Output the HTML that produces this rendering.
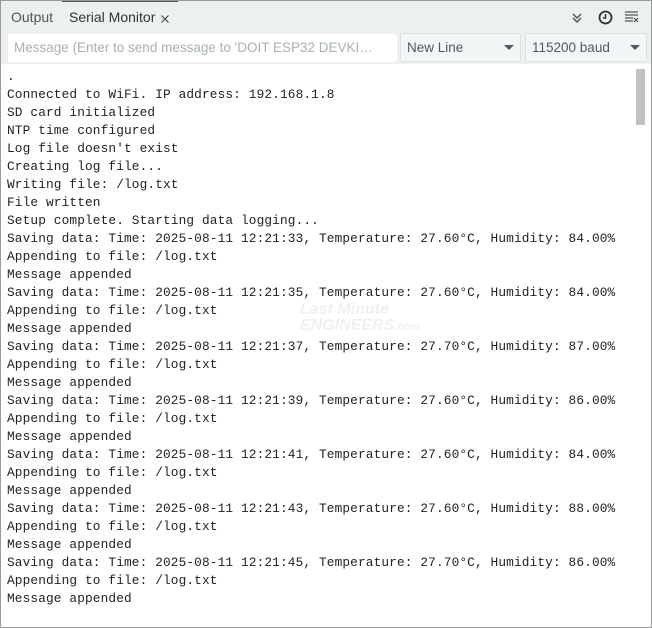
<!DOCTYPE html>
<html><head><meta charset="utf-8"><style>
*{margin:0;padding:0;box-sizing:border-box}
body{width:652px;height:628px;overflow:hidden;background:#fff;font-family:"Liberation Sans",sans-serif;position:relative}
.frame{position:absolute;left:0;top:0;width:652px;height:628px;border:1px solid #9a9a9a;}
.head{position:absolute;left:1px;top:1px;width:650px;height:63px;background:#ecf0f1}
.tab{position:absolute;top:8px;font-size:14px;color:#555}
.activebar{position:absolute;left:61px;top:0;width:116px;height:1px;background:#555}
.inp{position:absolute;left:7px;top:33px;width:389px;height:28px;background:#fff;border-radius:2px;font-size:13.5px;color:#a9b0b3;padding:6px 6px}
.dd{position:absolute;top:32px;height:29px;background:#f3f6f7;border:1px solid #dbe1e3;border-radius:2px;font-size:13.5px;color:#4d5a60;padding:6px 6px}
.tri{position:absolute;right:6px;top:11px;width:0;height:0;border-left:5px solid transparent;border-right:5px solid transparent;border-top:5px solid #4d5a60}
pre{position:absolute;left:7px;top:68px;font-family:"Liberation Mono","Courier New",monospace;font-size:12.8px;letter-spacing:0.12px;line-height:18px;color:#222}
.sb{position:absolute;left:636px;top:69px;width:9px;height:56px;background:#c1c1c1}
.wm{position:absolute;left:300px;top:302px;color:#eef0f2;font-style:italic;font-weight:bold;font-size:16px;line-height:16px}
</style></head><body>
<div class="head">
<div class="activebar"></div>
<div class="tab" style="left:10px">Output</div>
<div class="tab" style="left:68px;color:#333">Serial Monitor</div>
<svg style="position:absolute;left:160px;top:14px" width="8" height="8" viewBox="0 0 8 8"><path d="M0.5 0.5l7 7M7.5 0.5l-7 7" stroke="#444" stroke-width="1.1"/></svg>
<svg style="position:absolute;left:570px;top:11px" width="12" height="12" viewBox="0 0 12 12"><path d="M2 2l4 4 4-4M2 6l4 4 4-4" stroke="#555" stroke-width="1.5" fill="none"/></svg>
<svg style="position:absolute;left:597px;top:9px" width="15" height="15" viewBox="0 0 15 15"><circle cx="7.5" cy="7.5" r="6" stroke="#333" stroke-width="1.8" fill="none"/><path d="M7.5 4v4H5" stroke="#333" stroke-width="1.5" fill="none"/></svg>
<svg style="position:absolute;left:623px;top:10px" width="15" height="12" viewBox="0 0 15 12"><path d="M1 1h13M1 4h13M1 7h8M1 10h8M10 7l4 4M14 7l-4 4" stroke="#555" stroke-width="1.2" fill="none"/></svg>
<div class="inp">Message (Enter to send message to 'DOIT ESP32 DEVKI…</div>
<div class="dd" style="left:399px;width:121px">New Line<div class="tri"></div></div>
<div class="dd" style="left:524px;width:122px">115200 baud<div class="tri"></div></div>
</div>
<div class="wm">Last Minute<br>ENGINEERS<span style="font-size:11px">.com</span></div>
<pre>.
Connected to WiFi. IP address: 192.168.1.8
SD card initialized
NTP time configured
Log file doesn't exist
Creating log file...
Writing file: /log.txt
File written
Setup complete. Starting data logging...
Saving data: Time: 2025-08-11 12:21:33, Temperature: 27.60°C, Humidity: 84.00%
Appending to file: /log.txt
Message appended
Saving data: Time: 2025-08-11 12:21:35, Temperature: 27.60°C, Humidity: 84.00%
Appending to file: /log.txt
Message appended
Saving data: Time: 2025-08-11 12:21:37, Temperature: 27.70°C, Humidity: 87.00%
Appending to file: /log.txt
Message appended
Saving data: Time: 2025-08-11 12:21:39, Temperature: 27.60°C, Humidity: 86.00%
Appending to file: /log.txt
Message appended
Saving data: Time: 2025-08-11 12:21:41, Temperature: 27.60°C, Humidity: 84.00%
Appending to file: /log.txt
Message appended
Saving data: Time: 2025-08-11 12:21:43, Temperature: 27.60°C, Humidity: 88.00%
Appending to file: /log.txt
Message appended
Saving data: Time: 2025-08-11 12:21:45, Temperature: 27.70°C, Humidity: 86.00%
Appending to file: /log.txt
Message appended</pre>
<div class="sb"></div>
<div class="frame"></div>
</body></html>
